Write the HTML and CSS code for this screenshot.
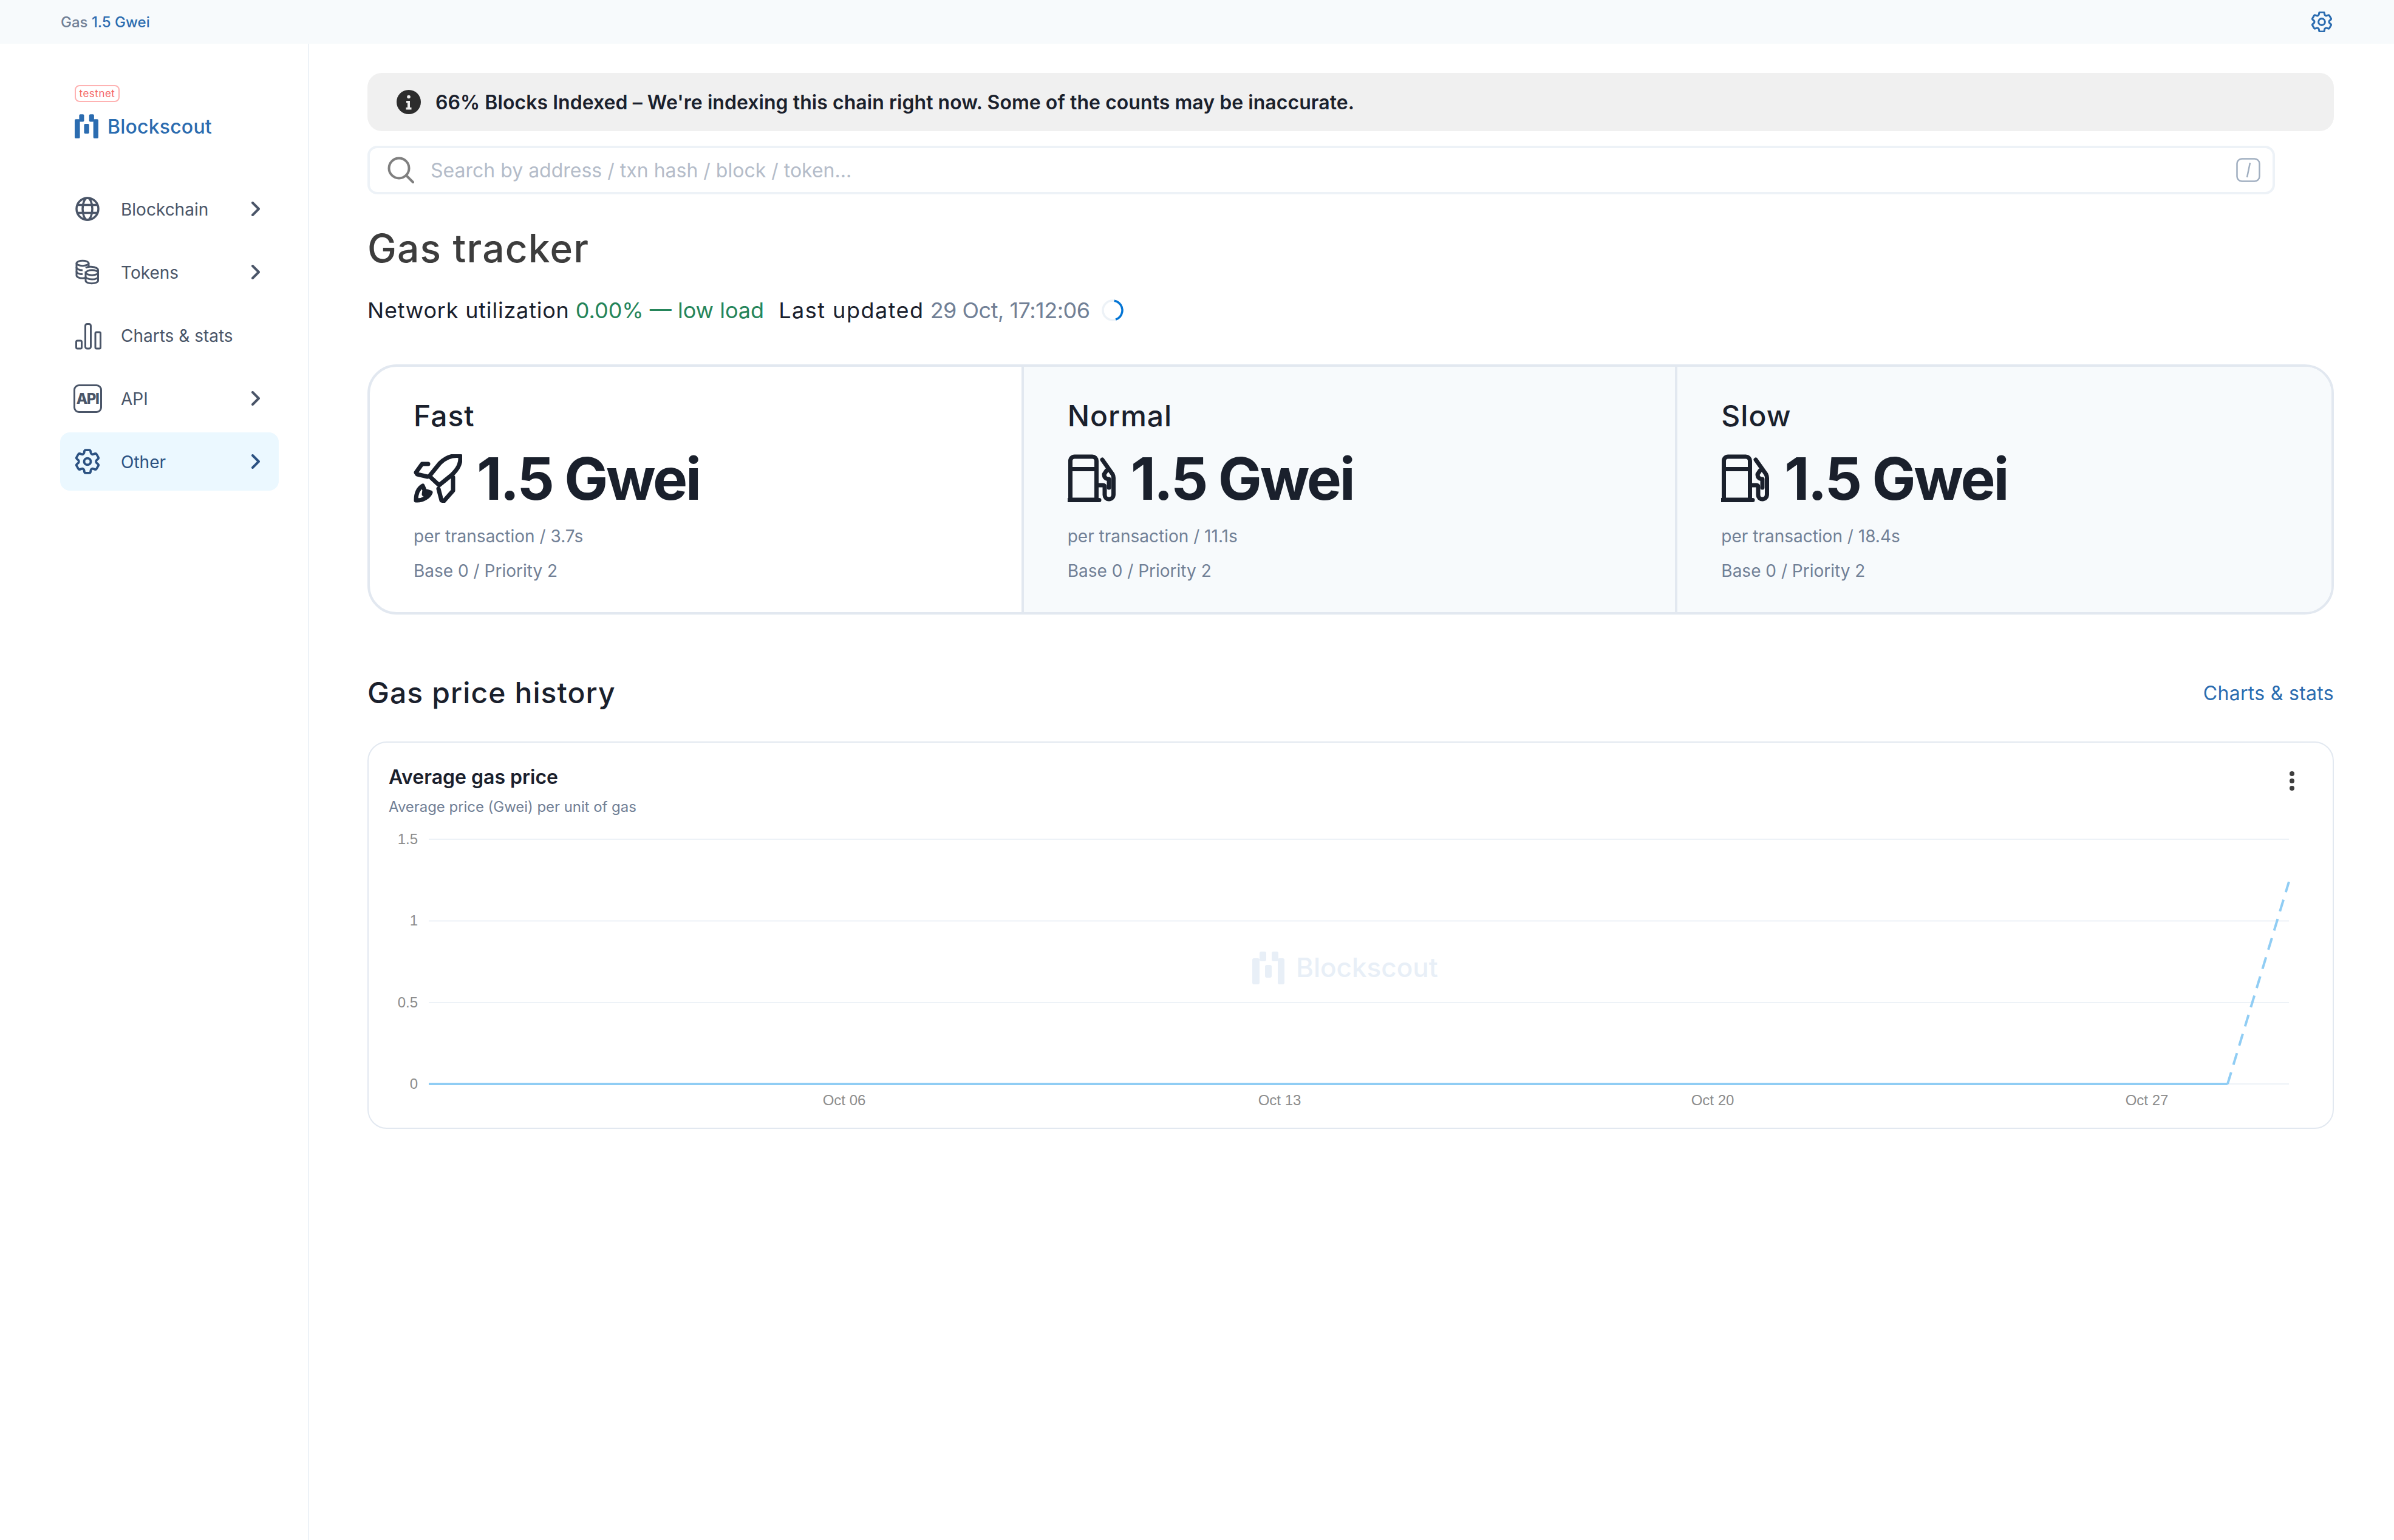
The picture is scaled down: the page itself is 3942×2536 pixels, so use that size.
FILE: index.html
```html
<!DOCTYPE html>
<html lang="en">
<head>
<meta charset="utf-8">
<title>Gas tracker</title>
<link rel="stylesheet" href="styles.css">
</head>
<body>
<header class="topbar">
  <div class="topbar-gas">Gas <a class="link">1.5 Gwei</a></div>
  <svg class="topbar-gear" viewBox="2.5 2.5 19 19"><path d="M9.594 3.94c.09-.542.56-.94 1.11-.94h2.593c.55 0 1.02.398 1.11.94l.213 1.281c.063.374.313.686.645.87.074.04.147.083.22.127.325.196.72.257 1.075.124l1.217-.456a1.125 1.125 0 0 1 1.37.49l1.296 2.247a1.125 1.125 0 0 1-.26 1.431l-1.003.827c-.293.241-.438.613-.43.992a7.723 7.723 0 0 1 0 .255c-.008.378.137.75.43.991l1.004.827c.424.35.534.955.26 1.43l-1.298 2.247a1.125 1.125 0 0 1-1.369.491l-1.217-.456c-.355-.133-.75-.072-1.076.124a6.47 6.47 0 0 1-.22.128c-.331.183-.581.495-.644.869l-.213 1.281c-.09.543-.56.94-1.11.94h-2.594c-.55 0-1.019-.398-1.11-.94l-.213-1.281c-.062-.374-.312-.686-.644-.87a6.52 6.52 0 0 1-.22-.127c-.325-.196-.72-.257-1.076-.124l-1.217.456a1.125 1.125 0 0 1-1.369-.49l-1.297-2.247a1.125 1.125 0 0 1 .26-1.431l1.004-.827c.292-.24.437-.613.43-.991a6.932 6.932 0 0 1 0-.255c.007-.38-.138-.751-.43-.992l-1.004-.827a1.125 1.125 0 0 1-.26-1.43l1.297-2.247a1.125 1.125 0 0 1 1.37-.491l1.216.456c.356.133.751.072 1.076-.124.072-.044.146-.086.22-.128.332-.183.582-.495.644-.869l.214-1.28Z"/><circle cx="12" cy="12" r="3"/></svg>
</header>
<div class="shell">
  <aside class="sidebar">
    <div class="brand">
      <span class="badge">testnet</span>
      <div class="logo">
        <svg class="logo-mark" viewBox="0 0 159 162"><rect x="30" y="0" width="33" height="50" rx="8"/><rect x="0" y="33" width="35" height="129" rx="8"/><rect x="63" y="65" width="34" height="65" rx="7"/><rect x="97" y="0" width="33" height="50" rx="8"/><rect x="125" y="33" width="34" height="129" rx="8"/></svg>
        <span class="logo-text">Blockscout</span>
      </div>
    </div>
    <nav class="nav">
      <a class="nav-item">
        <svg class="nav-icon" viewBox="0 0 40 40"><circle cx="20" cy="20" r="18"/><ellipse cx="20" cy="20" rx="8" ry="18"/><path d="M3 13.5h34M3 26.5h34"/></svg>
        <span class="nav-label">Blockchain</span>
        <svg class="chev" viewBox="0 0 14 24"><path d="M2 2l10 10L2 22"/></svg>
      </a>
      <a class="nav-item">
        <svg class="nav-icon thin" viewBox="0 0 40 40"><path d="M2 5.5v20c0 2.6 4.500 4.700 10 4.700 1.500 0 3-.2 4.200-.5"/><ellipse cx="12" cy="5.500" rx="10" ry="4.200"/><path d="M2 12.300c0 2.500 4.500 4.600 10 4.600M2 19c0 2.500 4.500 4.600 10 4.600"/><path d="M22 5.500v6M17 13c2.500-1.500 6-2 9-1.700 6 .5 11.500 2.500 11.500 5.200v17.500c0 2.700-4.800 4.700-10.500 4.700S17 36.700 17 34V19"/><ellipse cx="27.500" cy="21" rx="10" ry="4.200"/><path d="M17 27.500c0 2.500 4.500 4.600 10.500 4.600s10-2.100 10-4.600"/></svg>
        <span class="nav-label">Tokens</span>
        <svg class="chev" viewBox="0 0 14 24"><path d="M2 2l10 10L2 22"/></svg>
      </a>
      <a class="nav-item">
        <svg class="nav-icon thin" viewBox="0 0 40 40"><rect x="1.500" y="29" width="9" height="13" rx="2"/><rect x="16.500" y="1.500" width="9" height="40.500" rx="3"/><rect x="33" y="15" width="8.500" height="27" rx="2"/></svg>
        <span class="nav-label">Charts &amp; stats</span>
      </a>
      <a class="nav-item">
        <span class="api-box">API</span>
        <span class="nav-label">API</span>
        <svg class="chev" viewBox="0 0 14 24"><path d="M2 2l10 10L2 22"/></svg>
      </a>
      <a class="nav-item active">
        <svg class="nav-icon thin" viewBox="2.500 2.500 19 19"><path class="gear-line" d="M9.594 3.94c.09-.542.56-.94 1.11-.94h2.593c.55 0 1.02.398 1.11.94l.213 1.281c.063.374.313.686.645.87.074.04.147.083.22.127.325.196.72.257 1.075.124l1.217-.456a1.125 1.125 0 0 1 1.37.49l1.296 2.247a1.125 1.125 0 0 1-.26 1.431l-1.003.827c-.293.241-.438.613-.43.992a7.723 7.723 0 0 1 0 .255c-.008.378.137.75.43.991l1.004.827c.424.35.534.955.26 1.43l-1.298 2.247a1.125 1.125 0 0 1-1.369.491l-1.217-.456c-.355-.133-.75-.072-1.076.124a6.47 6.47 0 0 1-.22.128c-.331.183-.581.495-.644.869l-.213 1.281c-.09.543-.56.94-1.11.94h-2.594c-.55 0-1.019-.398-1.11-.94l-.213-1.281c-.062-.374-.312-.686-.644-.87a6.52 6.52 0 0 1-.22-.127c-.325-.196-.72-.257-1.076-.124l-1.217.456a1.125 1.125 0 0 1-1.369-.49l-1.297-2.247a1.125 1.125 0 0 1 .26-1.431l1.004-.827c.292-.24.437-.613.43-.991a6.932 6.932 0 0 1 0-.255c.007-.38-.138-.751-.43-.992l-1.004-.827a1.125 1.125 0 0 1-.26-1.43l1.297-2.247a1.125 1.125 0 0 1 1.37-.491l1.216.456c.356.133.751.072 1.076-.124.072-.044.146-.086.22-.128.332-.183.582-.495.644-.869l.214-1.28Z"/><circle class="gear-line" cx="12" cy="12" r="2.600"/></svg>
        <span class="nav-label">Other</span>
        <svg class="chev" viewBox="0 0 14 24"><path d="M2 2l10 10L2 22"/></svg>
      </a>
    </nav>
  </aside>
  <main class="main">
    <div class="alert">
      <svg class="alert-icon" viewBox="0 0 40 40"><circle cx="20" cy="20" r="20" class="alert-disc"/><circle cx="20" cy="11.500" r="2.800" class="alert-i"/><path d="M16 18h6v11h2.500v3.500h-9V29H18v-7.500h-2z" class="alert-i"/></svg>
      <span>66% Blocks Indexed – We're indexing this chain right now. Some of the counts may be inaccurate.</span>
    </div>
    <div class="search">
      <svg class="search-icon" viewBox="0 0 44 44"><circle cx="19" cy="19" r="16.500"/><path d="M31 31l11 11"/></svg>
      <span class="search-text">Search by address / txn hash / block / token...</span>
      <svg class="slash-key" viewBox="0 0 40 40"><rect x="1.500" y="1.500" width="37" height="37" rx="8"/><path d="M23 8l-5 24"/></svg>
    </div>
    <h1 class="title">Gas tracker</h1>
    <div class="status">
      <span class="status-key">Network utilization</span>
      <span class="status-good">0.00% — low load</span>
      <span class="status-key status-updated">Last updated</span>
      <span class="status-time">29 Oct, 17:12:06</span>
      <svg class="spinner" viewBox="0 0 36 36"><circle class="spinner-track" cx="18" cy="18" r="16"/><circle class="spinner-arc" cx="18" cy="18" r="16" pathLength="100" stroke-dasharray="42 58" transform="rotate(-80 18 18)"/></svg>
    </div>
    <section class="tiers">
      <div class="tier">
        <div class="tier-name">Fast</div>
        <div class="tier-price">
          <svg class="tier-icon" viewBox="0 0 80 80"><path d="M77 3c1 14-5 22-14 31L42 51 26 36 43 15C52 6 64 1 77 3Z"/><path d="M24 16H14L4 30l2 3 17 4"/><path d="M65 38v22L50 77l-4-1-5-19"/><path d="M15 52C8 56 4 64 4 76c11 1 21-6 24-13l-6-2-5 5 1-7z"/></svg>
          <span class="tier-value">1.5 Gwei</span>
        </div>
        <div class="tier-note first">per transaction / 3.7s</div>
        <div class="tier-note">Base 0 / Priority 2</div>
      </div>
      <div class="tier shaded">
        <div class="tier-name">Normal</div>
        <div class="tier-price">
          <svg class="tier-icon" viewBox="0 0 80 80"><path d="M4.500 75V11c0-4 3-7 7-7h29c4 0 7 3 7 7v64Z"/><path d="M4.500 24.500h43"/><path d="M0 75.500h52"/><path d="M57 9l17 24c1 2 1.500 4 1.500 6v27c0 5-3.500 8-7.500 8s-7-3-7-7V54c0-2-1-3-3-3h-7"/><path d="M64 27l-4 6c0 5 3 8 8 8V55"/></svg>
          <span class="tier-value">1.5 Gwei</span>
        </div>
        <div class="tier-note first">per transaction / 11.1s</div>
        <div class="tier-note">Base 0 / Priority 2</div>
      </div>
      <div class="tier shaded">
        <div class="tier-name">Slow</div>
        <div class="tier-price">
          <svg class="tier-icon" viewBox="0 0 80 80"><path d="M4.500 75V11c0-4 3-7 7-7h29c4 0 7 3 7 7v64Z"/><path d="M4.500 24.500h43"/><path d="M0 75.500h52"/><path d="M57 9l17 24c1 2 1.500 4 1.500 6v27c0 5-3.500 8-7.500 8s-7-3-7-7V54c0-2-1-3-3-3h-7"/><path d="M64 27l-4 6c0 5 3 8 8 8V55"/></svg>
          <span class="tier-value">1.5 Gwei</span>
        </div>
        <div class="tier-note first">per transaction / 18.4s</div>
        <div class="tier-note">Base 0 / Priority 2</div>
      </div>
    </section>
    <div class="section-head">
      <h2 class="section-title">Gas price history</h2>
      <a class="section-link">Charts &amp; stats</a>
    </div>
    <section class="chart-card">
      <div class="chart-head">
        <div>
          <div class="chart-title">Average gas price</div>
          <div class="chart-sub">Average price (Gwei) per unit of gas</div>
        </div>
        <svg class="chart-menu" viewBox="0 0 10 40"><circle cx="5" cy="5" r="4"/><circle cx="5" cy="17" r="4"/><circle cx="5" cy="29" r="4"/></svg>
      </div>
      <svg class="chart" viewBox="607 1345 3233 512">
        <g class="grid">
          <path d="M706 1382H3769M706 1516.500H3769M706 1651H3769M706 1785H3769"/>
        </g>
        <g class="watermark">
          <rect x="2074" y="1567" width="11" height="16" rx="3"/><rect x="2062" y="1578" width="12" height="43" rx="3"/><rect x="2083" y="1589" width="11" height="21" rx="3"/><rect x="2094" y="1567" width="11" height="16" rx="3"/><rect x="2104" y="1578" width="11" height="43" rx="3"/>
          <text x="2134" y="1609" class="watermark-text">Blockscout</text>
        </g>
        <path class="series" d="M706 1785H3668"/>
        <path class="series dashed" d="M3668 1785L3769 1452"/>
        <g class="axis-y">
          <text x="688" y="1390">1.5</text>
          <text x="688" y="1524">1</text>
          <text x="688" y="1659">0.5</text>
          <text x="688" y="1793">0</text>
        </g>
        <g class="axis-x">
          <text x="1390" y="1820">Oct 06</text>
          <text x="2107" y="1820">Oct 13</text>
          <text x="2820" y="1820">Oct 20</text>
          <text x="3535" y="1820">Oct 27</text>
        </g>
      </svg>
    </section>
  </main>
</div>
</body>
</html>
```
FILE: styles.css
```css
* { box-sizing: border-box; }
html, body { margin: 0; padding: 0; background: #fff; }
body {
  font-family: Inter, "Noto Sans", sans-serif;
  color: #1a202c;
  width: 3942px;
  height: 2536px;
  display: flex;
  flex-direction: column;
  overflow: hidden;
}
.link { color: #2b6cb0; }

.topbar {
  height: 72px;
  flex: none;
  background: #f7fafc;
  display: flex;
  align-items: center;
  justify-content: space-between;
  padding: 0 102px 0 100px;
}
.topbar-gas { font-size: 24px; font-weight: 500; color: #718096; }
.topbar-gear { width: 34px; height: 34px; fill: none; stroke: #2b6cb0; stroke-width: 1.700; }

.shell { flex: 1; display: flex; min-height: 0; }

.sidebar {
  width: 509px;
  flex: none;
  border-right: 2px solid #edf2f7;
  padding: 68px 48px 0 99px;
}
.brand { margin-left: 24px; }
.badge {
  display: block;
  width: 74px;
  height: 28px;
  border: 2px solid #feb2b2;
  border-radius: 8px;
  color: #f56565;
  font-size: 17px;
  line-height: 24px;
  text-align: center;
  letter-spacing: 0.5px;
}
.logo { display: flex; align-items: center; gap: 15px; margin-top: 20px; height: 40px; color: #2b6cb0; }
.logo-mark { width: 39px; height: 40px; fill: #2b6cb0; }
.logo-text { font-size: 32px; font-weight: 500; line-height: 40px; letter-spacing: 0.2px; padding-top: 2px; }

.nav { margin-top: 68px; display: flex; flex-direction: column; gap: 8px; }
.nav-item {
  height: 96px;
  border-radius: 16px;
  display: flex;
  align-items: center;
  padding: 0 31px 0 25px;
  color: #4a5568;
}
.nav-item.active { background: #ebf8ff; color: #2c5282; }
.nav-icon { width: 40px; height: 40px; flex: none; fill: none; stroke: currentColor; stroke-width: 3.500; overflow: visible; }
.nav-icon.thin { stroke-width: 3; }
.gear-line { stroke-width: 1.800; }
.nav-label { flex: 1; margin-left: 35px; font-size: 28px; line-height: 40px; padding-top: 2px; }
.chev { width: 14px; height: 24px; flex: none; fill: none; stroke: currentColor; stroke-width: 4; stroke-linecap: round; stroke-linejoin: round; }
.api-box {
  width: 47px;
  height: 47px;
  margin: 0 -3.500px;
  flex: none;
  border: 3px solid currentColor;
  border-radius: 9px;
  font-size: 24px;
  font-weight: 800;
  line-height: 41px;
  text-align: center;
  letter-spacing: -1.500px;
}

.main { flex: 1; min-width: 0; padding: 48px 99px 0 96px; }

.alert {
  height: 96px;
  background: #f0f0f0;
  border-radius: 24px;
  display: flex;
  align-items: center;
  gap: 24px;
  padding-left: 48px;
  font-size: 32px;
  font-weight: 600;
  letter-spacing: 0.05px;
  color: #1a202c;
}
.alert-icon { width: 40px; height: 40px; flex: none; }
.alert-disc { fill: #2d2d2d; }
.alert-i { fill: #f0f0f0; }

.search {
  margin-top: 24px;
  width: 3141px;
  height: 80px;
  border: 4px solid #edf2f7;
  border-radius: 16px;
  display: flex;
  align-items: center;
  padding: 0 20px 0 29px;
}
.search-icon { width: 44px; height: 44px; flex: none; fill: none; stroke: #7f7f7f; stroke-width: 4; stroke-linecap: round; }
.search-text { flex: 1; margin-left: 27px; font-size: 32px; color: #b4bcc9; }
.slash-key { width: 40px; height: 40px; flex: none; fill: none; stroke: #a0aec0; stroke-width: 2.500; }

.title { margin: 49px 0 0; font-size: 64px; line-height: 80px; font-weight: 500; letter-spacing: 1.2px; color: #3d3d3d; }

.status { margin-top: 38px; height: 48px; display: flex; align-items: center; font-size: 36px; gap: 10px; }
.status-key { color: #1a202c; letter-spacing: 0.8px; }
.status-good { color: #25855a; }
.status-updated { margin-left: 14px; letter-spacing: 1.500px; }
.status-time { color: #718096; letter-spacing: -0.5px; }
.spinner { width: 36px; height: 36px; margin-left: 9px; fill: none; stroke-width: 3.500; }
.spinner-track { stroke: #edf2f7; }
.spinner-arc { stroke: #0375d5; }

.tiers {
  margin-top: 65px;
  height: 412px;
  border: 4px solid #e2e8f0;
  border-radius: 48px;
  display: grid;
  grid-template-columns: repeat(3, 1fr);
  overflow: hidden;
}
.tier { padding: 49px 0 0 72px; border-right: 4px solid #e2e8f0; }
.tier:last-child { border-right: 0; }
.tier.shaded { background: #f7fafc; }
.tier-name { font-size: 48px; line-height: 64px; font-weight: 500; letter-spacing: 1px; color: #1a202c; }
.tier-price { margin-top: 31px; height: 80px; display: flex; align-items: center; gap: 24px; }
.tier-icon { width: 80px; height: 80px; flex: none; fill: none; stroke: #1a202c; stroke-width: 7; stroke-linejoin: round; stroke-linecap: round; }
.tier-value { font-size: 96px; font-weight: 700; line-height: 80px; letter-spacing: -3.200px; color: #1a202c; }
.tier-note { margin-top: 17px; font-size: 28px; line-height: 40px; color: #718096; }
.tier-note.first { margin-top: 35px; }

.section-head { margin-top: 97px; height: 64px; display: flex; align-items: center; justify-content: space-between; }
.section-title { margin: 0; font-size: 48px; line-height: 64px; font-weight: 500; letter-spacing: 1.100px; color: #1a202c; }
.section-link { font-size: 32px; letter-spacing: 0.3px; color: #2b6cb0; }

.chart-card {
  margin-top: 48px;
  height: 638px;
  border: 2px solid #e2e8f0;
  border-radius: 32px;
}
.chart-head { height: 122px; padding: 37px 62px 0 33px; display: flex; justify-content: space-between; }
.chart-title { font-size: 32px; line-height: 40px; font-weight: 600; color: #1a202c; }
.chart-sub { margin-top: 13px; font-size: 24px; line-height: 32px; letter-spacing: -0.05px; color: #718096; }
.chart-menu { width: 10px; height: 40px; margin-top: 9px; fill: #3d3d3d; }
.chart { display: block; width: 3233px; height: 512px; }
.grid path { fill: none; stroke: #edf2f7; stroke-width: 2; }
.series { fill: none; stroke: #90cdf4; stroke-width: 4; }
.series.dashed { stroke-dasharray: 20 13; }
.watermark { fill: #e8eff7; }
.watermark-text { font-size: 44px; font-weight: 500; }
.axis-y text, .axis-x text { font-family: "Liberation Sans", Arial, sans-serif; font-size: 24px; fill: #8c8c8c; }
.axis-y text { text-anchor: end; }
.axis-x text { text-anchor: middle; }
```
